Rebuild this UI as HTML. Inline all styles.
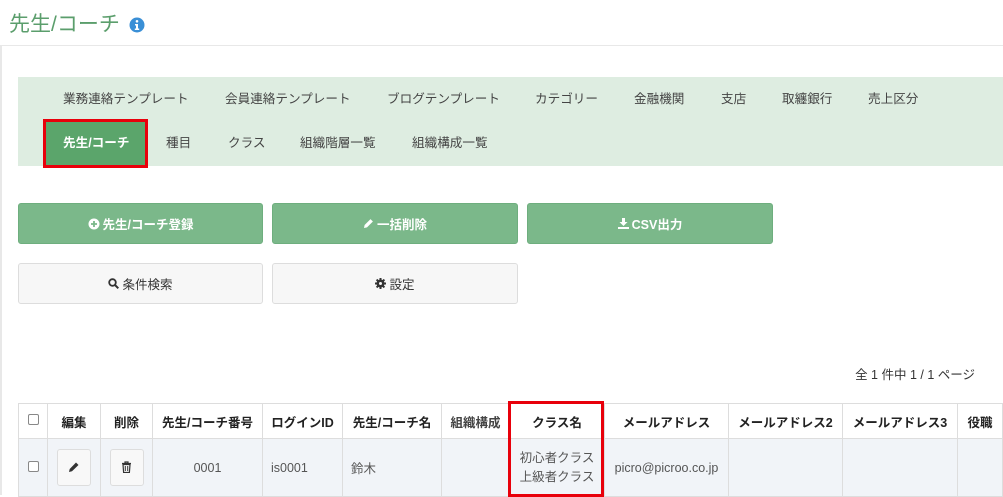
<!DOCTYPE html>
<html><head><meta charset="utf-8"><style>
*{box-sizing:border-box;margin:0;padding:0}
body{width:1003px;height:495px;overflow:hidden;background:#fff;font-family:"Liberation Sans","Noto Sans CJK JP",sans-serif;color:#333;position:relative}
.a{position:absolute;white-space:nowrap}
.nav{position:absolute;left:18px;top:77px;width:990px;height:89px;background:#deede1}
.ni{position:absolute;font-size:12.6px;color:#444;line-height:16px}
.btn{position:absolute;height:41px;border-radius:3px;font-size:12.5px;display:flex;align-items:center;justify-content:center;gap:3px}
.g{background:#7bb88a;color:#fff;border:1px solid #6eae7e;font-weight:bold}
.w{background:#f7f7f7;border:1px solid #ddd;color:#333}
table{position:absolute;left:18px;top:403px;border-collapse:collapse;font-size:12.5px}
td,th{border:1px solid #ddd;text-align:center;padding:0}
th{height:35px;font-weight:bold;color:#222}
.r td{height:58px;background:#f1f4f8;color:#555}
.cb{display:inline-block;width:11px;height:11px;border:1px solid #888;border-radius:2px;background:#fff}
.ib{display:inline-block;width:34px;height:37px;border:1px solid #ddd;border-radius:3px;background:#f8f8f8;vertical-align:middle;padding-top:11px}
</style></head><body>
<div style="position:absolute;left:0;top:45px;width:2px;height:450px;background:#e8e8e8"></div>
<div style="position:absolute;left:0;top:45px;width:1003px;height:1px;background:#e8e8e8"></div>
<div class="a" style="left:9px;top:12px;font-size:21px;color:#5b9e6c;line-height:26px">先生/コーチ</div>
<svg class="a" style="left:129px;top:17px" width="16" height="16" viewBox="0 0 16 16"><circle cx="8" cy="8" r="7.5" fill="#3a8fd6"/><circle cx="8" cy="4.3" r="1.3" fill="#fff"/><path d="M6 7h3v4.5h1.2V13H5.8v-1.5H7V8.5H6z" fill="#fff"/></svg>

<div class="nav"></div>
<div class="ni a" style="left:63px;top:91px">業務連絡テンプレート</div>
<div class="ni a" style="left:225px;top:91px">会員連絡テンプレート</div>
<div class="ni a" style="left:387px;top:91px">ブログテンプレート</div>
<div class="ni a" style="left:535px;top:91px">カテゴリー</div>
<div class="ni a" style="left:634px;top:91px">金融機関</div>
<div class="ni a" style="left:721px;top:91px">支店</div>
<div class="ni a" style="left:782px;top:91px">取纏銀行</div>
<div class="ni a" style="left:868px;top:91px">売上区分</div>
<div class="a" style="left:43px;top:119px;width:105px;height:49px;border:3px solid #e8000b;background:#5ba56b"></div>
<div class="ni a" style="left:63px;top:135px;color:#fff;font-weight:bold">先生/コーチ</div>
<div class="ni a" style="left:166px;top:135px">種目</div>
<div class="ni a" style="left:228px;top:135px">クラス</div>
<div class="ni a" style="left:300px;top:135px">組織階層一覧</div>
<div class="ni a" style="left:412px;top:135px">組織構成一覧</div>

<div class="btn g" style="left:18px;top:203px;width:245px"><svg width="12" height="12" viewBox="0 0 12 12"><circle cx="6" cy="6" r="5.5" fill="#fff"/><path d="M6 3v6M3 6h6" stroke="#7bb88a" stroke-width="1.8"/></svg>先生/コーチ登録</div>
<div class="btn g" style="left:272px;top:203px;width:246px"><svg width="11" height="11" viewBox="0 0 11 11"><path d="M1 10l.6-3L7.5 1.1l2.4 2.4L4 9.4z" fill="#fff"/></svg>一括削除</div>
<div class="btn g" style="left:527px;top:203px;width:246px"><svg width="11" height="11" viewBox="0 0 11 11"><path d="M4 0h3v4h2.5L5.5 8 1.5 4H4z M0 9h11v2H0z" fill="#fff"/></svg>CSV出力</div>
<div class="btn w" style="left:18px;top:263px;width:245px"><svg width="11" height="11" viewBox="0 0 11 11"><circle cx="4.5" cy="4.5" r="3.3" fill="none" stroke="#333" stroke-width="1.8"/><path d="M7 7l3.3 3.3" stroke="#333" stroke-width="2"/></svg>条件検索</div>
<div class="btn w" style="left:272px;top:263px;width:246px"><svg width="11" height="11" viewBox="0 0 11 11"><circle cx="5.5" cy="5.5" r="4" fill="#333"/><path d="M5.5 0v11M0 5.5h11M1.6 1.6l7.8 7.8M9.4 1.6l-7.8 7.8" stroke="#333" stroke-width="2"/><circle cx="5.5" cy="5.5" r="1.5" fill="#f7f7f7"/></svg>設定</div>

<div class="a" style="right:28px;top:364px;font-size:12.5px;color:#333">全 1 件中 1 / 1 ページ</div>

<table>
<tr><th style="width:29px"><span class="cb"></span></th><th style="width:53px">編集</th><th style="width:52px">削除</th><th style="width:110px">先生/コーチ番号</th><th style="width:80px">ログインID</th><th style="width:99px">先生/コーチ名</th><th style="width:68px;color:#444">組織構成</th><th style="width:95px">クラス名</th><th style="width:124px">メールアドレス</th><th style="width:114px">メールアドレス2</th><th style="width:115px">メールアドレス3</th><th style="width:45px">役職</th></tr>
<tr class="r"><td><span class="cb"></span></td><td><span class="ib"><svg width="12" height="12" viewBox="0 0 12 12"><path d="M1 11l.7-3L8 1.5l2.5 2.5L4 10.3z" fill="#333"/></svg></span></td><td><span class="ib"><svg width="11" height="12" viewBox="0 0 11 12"><path d="M1 2.5h9M4 2.5V1h3v1.5M2 3.5l.6 8h5.8l.6-8z" fill="none" stroke="#333" stroke-width="1.2"/><path d="M4.3 5v5M6.7 5v5" stroke="#333"/></svg></span></td><td>0001</td><td style="text-align:left;padding-left:8px">is0001</td><td style="text-align:left;padding-left:8px">鈴木</td><td></td><td style="line-height:19px">初心者クラス<br>上級者クラス</td><td>picro@picroo.co.jp</td><td></td><td></td><td></td></tr>
</table>
<div class="a" style="left:508px;top:401px;width:96px;height:96px;border:3px solid #e8000b"></div>
</body></html>
